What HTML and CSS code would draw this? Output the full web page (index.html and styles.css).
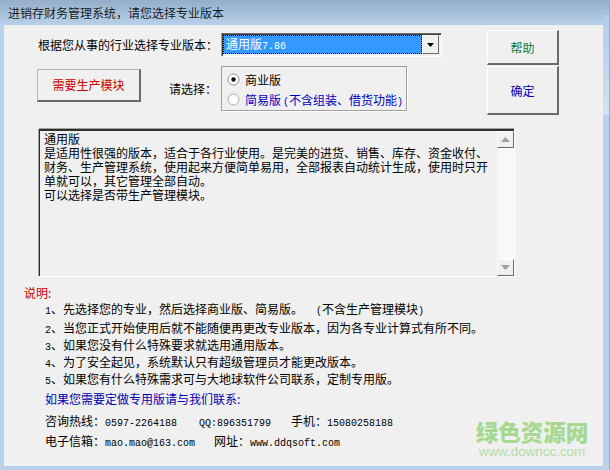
FILE: index.html
```html
<!DOCTYPE html>
<html lang="zh-CN">
<head>
<meta charset="utf-8">
<title>进销存财务管理系统</title>
<link rel="stylesheet" href="styles.css">
</head>
<body>
<div class="window">
  <div class="titlebar">进销存财务管理系统，请您选择专业版本</div>
  <div class="client">
    <div class="top">
      <div class="form">
        <div class="row-version">
          <span class="version-label">根据您从事的行业选择专业版本：</span>
          <div class="combo">
            <div class="combo-value">通用版<span class="latin">7.86</span></div>
            <div class="combo-btn"><svg width="7" height="4" viewBox="0 0 7 4"><path d="M0 0H7L3.5 4Z" fill="#000"/></svg></div>
          </div>
        </div>
        <div class="row-mode">
          <button class="btn btn-module">需要生产模块</button>
          <span class="choose-label">请选择：</span>
          <div class="group">
            <div class="radio">
              <svg width="13" height="13" viewBox="0 0 13 13"><circle cx="6.5" cy="6.5" r="5.5" fill="#fff" stroke="#8f8f8f"/><circle cx="6.5" cy="6.5" r="2.2" fill="#111"/></svg>
              <span>商业版</span>
            </div>
            <div class="radio radio-blue">
              <svg width="13" height="13" viewBox="0 0 13 13"><circle cx="6.5" cy="6.5" r="5.5" fill="#fff" stroke="#a8a8a8"/></svg>
              <span>简易版<span class="latin radio-paren">(</span>不含组装、借货功能<span class="latin">)</span></span>
            </div>
          </div>
        </div>
      </div>
      <div class="actions">
        <button class="btn btn-help">帮助</button>
        <button class="btn btn-ok">确定</button>
      </div>
    </div>

    <div class="memo">
      <div class="memo-text">
        <div>通用版</div>
        <div>是适用性很强的版本，适合于各行业使用。是完美的进货、销售、库存、资金收付、</div>
        <div>财务、生产管理系统，使用起来方便简单易用，全部报表自动统计生成，使用时只开</div>
        <div>单就可以，其它管理全部自动。</div>
        <div>可以选择是否带生产管理模块。</div>
      </div>
      <div class="scrollbar">
        <div class="scroll-btn"><svg width="9" height="5" viewBox="0 0 9 5"><path d="M4.5 0L9 5H0Z" fill="#a0a0a0"/></svg></div>
        <div class="scroll-track"></div>
        <div class="scroll-btn"><svg width="9" height="5" viewBox="0 0 9 5"><path d="M0 0H9L4.5 5Z" fill="#a0a0a0"/></svg></div>
      </div>
    </div>

    <div class="note-title">说明:</div>
    <ol class="notes">
      <li><span class="latin">1</span>、先选择您的专业，然后选择商业版、简易版。<span class="paren-note"><span class="latin">(</span>不含生产管理模块<span class="latin">)</span></span></li>
      <li class="note-second"><span class="latin">2</span>、当您正式开始使用后就不能随便再更改专业版本，因为各专业计算式有所不同。</li>
      <li><span class="latin">3</span>、如果您没有什么特殊要求就选用通用版本。</li>
      <li><span class="latin">4</span>、为了安全起见，系统默认只有超级管理员才能更改版本。</li>
      <li><span class="latin">5</span>、如果您有什么特殊需求可与大地球软件公司联系，定制专用版。</li>
    </ol>
    <div class="contact-title">如果您需要定做专用版请与我们联系:</div>
    <div class="contact contact-phone">
      <span>咨询热线：<span class="latin">0597-2264188</span></span>
      <span class="latin qq">QQ:896351799</span>
      <span>手机：<span class="latin">15080258188</span></span>
    </div>
    <div class="contact contact-mail">
      <span>电子信箱：<span class="latin">mao.mao@163.com</span></span>
      <span>网址：<span class="latin">www.ddqsoft.com</span></span>
    </div>
  </div>
  <div class="watermark">
    <div class="wm-cn">绿色资源网</div>
    <div class="wm-en">www.downcc.com</div>
  </div>
</div>
</body>
</html>
```
FILE: styles.css
```css
* { box-sizing: border-box; }
html, body { margin: 0; padding: 0; }
body {
  width: 610px;
  height: 470px;
  overflow: hidden;
  font-family: "Noto Sans CJK SC", sans-serif;
  font-size: 12px;
  color: #000;
}
.latin { font-family: "Liberation Mono", monospace; font-size: 10px; line-height: 1; }
.window {
  position: relative;
  width: 610px;
  height: 470px;
  padding: 0 7px 4px 4px;
  background: linear-gradient(180deg, #94aecb 0, #b9d1ea 26px);
  display: flex;
  flex-direction: column;
}
.window::before {
  content: "";
  position: absolute;
  right: 1px;
  top: 15px;
  width: 6px;
  height: 100px;
  background: linear-gradient(180deg, #b2cde6 0, #cfe3f3 100%);
}
.window::after {
  content: "";
  position: absolute;
  right: 0;
  top: 0;
  bottom: 0;
  width: 1px;
  background: #5fc5e6;
}
.titlebar {
  height: 25px;
  margin-left: -4px;
  padding-left: 8px;
  line-height: 26px;
  color: #0e1a28;
  text-shadow: 0 0 3px rgba(255, 255, 255, 0.35);
  white-space: nowrap;
}
.client {
  height: 441px;
  background: #f0f0f0;
  padding-top: 5px;
  white-space: nowrap;
}
.top { display: flex; height: 85px; }
.form { width: 438px; padding: 3px 0 0 33px; }
.row-version { display: flex; height: 24px; align-items: flex-start; }
.version-label { width: 184px; padding: 3px 0 0 1px; line-height: 17px; }
.combo {
  width: 221px;
  height: 24px;
  padding: 1px 2px 2px 1px;
  display: flex;
  background: #f0f0f0;
  border-top: 1px solid #6d6d6d;
  border-left: 1px solid #a0a0a0;
  border-right: 1px solid #fff;
  border-bottom: 1px solid #fff;
  box-shadow: inset 1px 1px 0 #3a3a3a;
}
.combo-value {
  flex: 1;
  padding-left: 3px;
  background: #3399ff;
  color: #fff;
  line-height: 17px;
  outline: 1px dotted #000;
  outline-offset: -1px;
}
.combo-btn {
  width: 17px;
  display: flex;
  align-items: center;
  justify-content: center;
  background: #f0f0f0;
  border-top: 1px solid #fff;
  border-left: 1px solid #fff;
  border-right: 1px solid #696969;
  border-bottom: 1px solid #696969;
}
.row-mode { display: flex; align-items: center; height: 45px; margin-top: 9px; }
.btn {
  padding: 0;
  font: inherit;
  background: #f0f0f0;
  border-top: 1px solid #fff;
  border-left: 1px solid #fff;
  border-right: 2px solid #6a6a6a;
  border-bottom: 2px solid #6a6a6a;
}
.btn-module { width: 104px; height: 33px; margin-bottom: 7px; color: #cc0000; border-top-color: #b4b4b4; border-left-color: #b4b4b4; }
.choose-label { width: 52px; margin-left: 28px; }
.group {
  width: 186px;
  height: 45px;
  padding: 2px 0 0 5px;
  border: 1px solid #a0a0a0;
  box-shadow: 1px 1px 0 #fff;
}
.radio { display: flex; align-items: center; gap: 5px; height: 20px; color: #000; }
.radio-blue { color: #0000c0; }
.radio-paren { margin-left: 2px; }
.actions { width: 72px; margin-left: 45px; display: flex; flex-direction: column; gap: 1px; }
.btn-help { height: 35px; color: #0b7a3a; }
.btn-ok { height: 49px; color: #0000b0; }

.memo {
  display: flex;
  width: 475px;
  height: 147px;
  margin: 14px 0 0 35px;
  border-top: 2px solid #303030;
  border-left: 1px solid #303030;
  box-shadow: 0 -1px 0 #a0a0a0, -1px 0 0 #a0a0a0, 1px 1px 0 #fff;
}
.memo-text { flex: 1; padding: 1px 0 0 4px; line-height: 14px; font-size: 12px; }
.memo-text div { height: 14px; }
.scrollbar { width: 17px; display: flex; flex-direction: column; }
.scroll-btn {
  height: 17px;
  display: flex;
  align-items: center;
  justify-content: center;
  background: #f0f0f0;
  border-top: 1px solid #fff;
  border-left: 1px solid #fff;
  border-right: 1px solid #696969;
  border-bottom: 1px solid #696969;
}
.scroll-track { flex: 1; background: #f8f8f8; }

.note-title { height: 15px; margin: 8px 0 0 20px; line-height: 17px; color: #d00000; }
.notes { list-style: none; margin: 1px 0 0; padding: 0 0 0 41px; line-height: 17px; }
.notes li { height: 17px; }
.note-second { margin-top: 2px; }
.paren-note { margin-left: 13px; }
.contact-title { height: 17px; margin: 3px 0 0 41px; line-height: 17px; color: #0000b0; }
.contact { display: flex; align-items: baseline; height: 17px; margin-left: 41px; line-height: 17px; }
.contact-phone { margin-top: 5px; gap: 20px; }
.qq { margin-left: 2px; }
.contact-mail { margin-top: 3px; gap: 19px; }

.watermark {
  position: absolute;
  left: 474px;
  top: 418px;
  width: 116px;
  text-align: center;
  color: #a6d98f;
}
.wm-cn { height: 26px; font-size: 22.5px; font-weight: 900; line-height: 26px; white-space: nowrap; }
.wm-en { height: 16px; font-family: "Liberation Sans", sans-serif; font-size: 13.4px; line-height: 16px; color: #b4dca4; white-space: nowrap; }
```
